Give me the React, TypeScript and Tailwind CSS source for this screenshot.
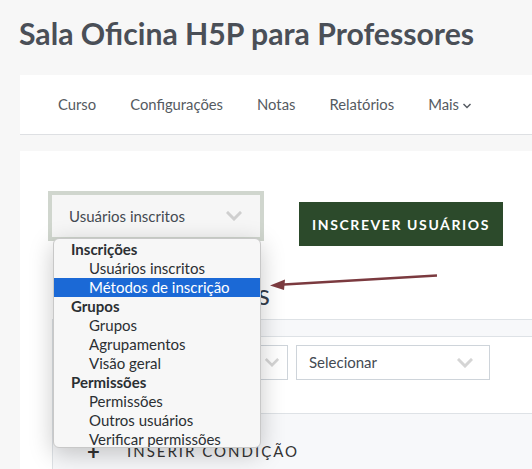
import React from "react";

const Chevron = ({ className = "" }: { className?: string }) => (
  <svg viewBox="0 0 16 10" className={className} fill="none">
    <path d="M2 2 L8 8 L14 2" stroke="currentColor" strokeWidth="3" strokeLinecap="square" />
  </svg>
);

const groups: { title: string; items: string[] }[] = [
  { title: "Inscrições", items: ["Usuários inscritos", "Métodos de inscrição"] },
  { title: "Grupos", items: ["Grupos", "Agrupamentos", "Visão geral"] },
  { title: "Permissões", items: ["Permissões", "Outros usuários", "Verificar permissões"] },
];

export default function App() {
  return (
    <div className="relative w-[532px] h-[469px] overflow-hidden bg-[#f7f7f7] font-['Lato',sans-serif]">
      <h1 className="pl-[19px] pt-[9px] h-[75px] text-[30.2px] leading-[48px] font-bold text-[#4a4f57] whitespace-nowrap">
        Sala Oficina H5P para Professores
      </h1>
      <nav className="ml-[20px] h-[60px] bg-white border-b border-[#dee0e3] flex items-center pl-[38px] gap-[34px] text-[14.8px] text-[#555a61]">
        <span>Curso</span>
        <span>Configurações</span>
        <span>Notas</span>
        <span>Relatórios</span>
        <span className="flex items-center gap-[4px]">
          Mais
          <Chevron className="w-[8px] h-[6px] text-[#555a61] mt-[2px]" />
        </span>
      </nav>
      <div className="ml-[20px] mt-[16px] bg-white h-[400px]">
        <div className="flex items-start pl-[28px] pt-[40px]">
          <div className="w-[216px] h-[50px] border-[4px] border-[#d0d6ce] bg-[#f6f6f6] flex items-center justify-between pl-[17px] pr-[18px] text-[15px] text-[#444a52]">
            <span>Usuários inscritos</span>
            <Chevron className="w-[16px] h-[10px] text-[#cfcfcf]" />
          </div>
          <div className="ml-[35px] mt-[11px] w-[204px] h-[44px] bg-[#2c4a2b] flex items-center justify-center text-white text-[14px] font-bold tracking-[1.6px]">
            INSCREVER USUÁRIOS
          </div>
        </div>
        <div className="ml-[32px] mt-[38px] h-[35px] w-[218px] flex justify-end overflow-hidden">
          <span className="text-[28px] leading-[20px] text-[#343e4c] whitespace-nowrap">Usuários inscritos</span>
        </div>
        <div className="ml-[32px] border-l border-t border-[#dee2e6]">
          <div className="h-[17px] bg-[#f7f8fa] border-b border-[#dee2e6]" />
          <div className="h-[76px] flex items-start pt-[8px] gap-[8px] pl-[75px]">
            <div className="w-[160px] h-[35px] border border-[#ced4da] flex items-center justify-end pr-[8px]">
              <Chevron className="w-[14px] h-[9px] text-[#d5d5d5]" />
            </div>
            <div className="w-[194px] h-[35px] border border-[#ced4da] flex items-center justify-between pl-[12px] pr-[16px] text-[15px] text-[#444a52]">
              <span>Selecionar</span>
              <Chevron className="w-[16px] h-[10px] text-[#d5d5d5]" />
            </div>
          </div>
          <div className="h-[60px] bg-[#f7f8fa] border-t border-[#dee2e6] flex items-center pl-[34px] pt-[16px] text-[15px] text-[#333]">
            <span className="text-[22px] font-bold leading-none w-[40px]">+</span>
            <span className="tracking-[2px]">INSERIR CONDIÇÃO</span>
          </div>
        </div>
      </div>

      <div className="absolute left-[53px] top-[238px] w-[208px] h-[210px] bg-[#f7f7f7] border border-[#c8c8c8] rounded-[6px] shadow-[0_6px_24px_rgba(0,0,0,0.22)] pt-[1px] overflow-hidden text-[15px] text-[#2b2f33]">
        {groups.map((g) => (
          <div key={g.title}>
            <div className="h-[19px] leading-[19px] pl-[17px] font-bold">{g.title}</div>
            {g.items.map((it) => (
              <div
                key={it}
                className={
                  it === "Métodos de inscrição"
                    ? "h-[19px] leading-[19px] pl-[35px] bg-[#1b69d6] text-white"
                    : "h-[19px] leading-[19px] pl-[35px]"
                }
              >
                {it}
              </div>
            ))}
          </div>
        ))}
      </div>

      <svg className="absolute left-0 top-0" width="532" height="469" viewBox="0 0 532 469">
        <line x1="437" y1="275.5" x2="284" y2="284.5" stroke="#7b3a3f" strokeWidth="2.5" />
        <polygon points="270,285.5 285,279.5 284,290" fill="#7b3a3f" />
      </svg>
    </div>
  );
}
